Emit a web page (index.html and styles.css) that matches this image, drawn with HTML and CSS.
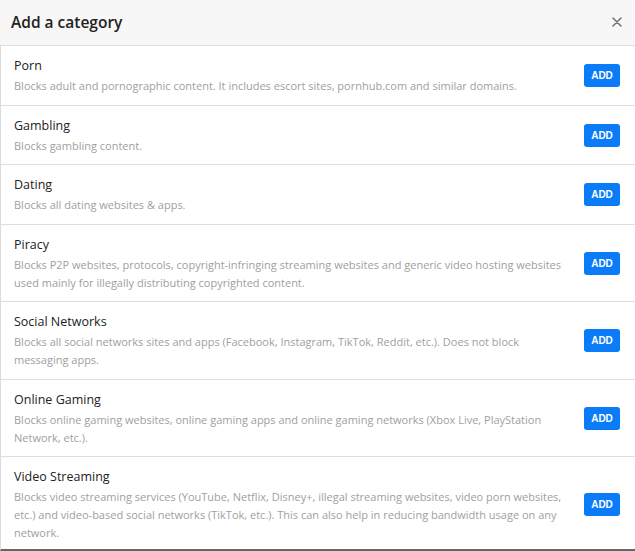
FILE: index.html
```html
<!DOCTYPE html>
<html>
<head>
<meta charset="utf-8">
<link rel="stylesheet" href="styles.css">
</head>
<body>
<div class="modal">
  <div class="modal-header">
    <h2 class="modal-title">Add a category</h2>
    <button class="close" aria-label="Close">
      <svg width="10" height="10" viewBox="0 0 10 10"><path d="M1 1L9 9M9 1L1 9" stroke="#707070" stroke-width="1.5" stroke-linecap="round"/></svg>
    </button>
  </div>
  <div class="modal-body">
    <div class="item">
      <div class="info">
        <div class="name">Porn</div>
        <div class="desc">Blocks adult and pornographic content. It includes escort sites, pornhub.com and similar domains.</div>
      </div>
      <button class="add">ADD</button>
    </div>
    <div class="item">
      <div class="info">
        <div class="name">Gambling</div>
        <div class="desc">Blocks gambling content.</div>
      </div>
      <button class="add">ADD</button>
    </div>
    <div class="item">
      <div class="info">
        <div class="name">Dating</div>
        <div class="desc">Blocks all dating websites &amp; apps.</div>
      </div>
      <button class="add">ADD</button>
    </div>
    <div class="item">
      <div class="info">
        <div class="name">Piracy</div>
        <div class="desc">Blocks P2P websites, protocols, copyright-infringing streaming websites and generic video hosting websites used mainly for illegally distributing copyrighted content.</div>
      </div>
      <button class="add">ADD</button>
    </div>
    <div class="item">
      <div class="info">
        <div class="name">Social Networks</div>
        <div class="desc">Blocks all social networks sites and apps (Facebook, Instagram, TikTok, Reddit, etc.). Does not block messaging apps.</div>
      </div>
      <button class="add">ADD</button>
    </div>
    <div class="item">
      <div class="info">
        <div class="name">Online Gaming</div>
        <div class="desc">Blocks online gaming websites, online gaming apps and online gaming networks (Xbox Live, PlayStation Network, etc.).</div>
      </div>
      <button class="add">ADD</button>
    </div>
    <div class="item">
      <div class="info">
        <div class="name">Video Streaming</div>
        <div class="desc">Blocks video streaming services (YouTube, Netflix, Disney+, illegal streaming websites, video porn websites, etc.) and video-based social networks (TikTok, etc.). This can also help in reducing bandwidth usage on any network.</div>
      </div>
      <button class="add">ADD</button>
    </div>
  </div>
</div>
</body>
</html>
```
FILE: styles.css
```css
* { box-sizing: border-box; }
html, body { margin: 0; padding: 0; background: #fff; }
body {
  font-family: "Open Sans", "Noto Sans", sans-serif;
  width: 635px;
  height: 551px;
  overflow: hidden;
}
.modal {
  display: flex;
  flex-direction: column;
  height: 551px;
}
.modal-header {
  display: flex;
  align-items: center;
  justify-content: space-between;
  height: 46px;
  padding: 0 13px 2px 11px;
  background: #f7f7f7;
  border-bottom: 1px solid #dedede;
}
.modal-title {
  margin: 0;
  font-size: 15.5px;
  font-weight: 600;
  color: #222;
}
.close {
  border: 0;
  background: transparent;
  padding: 0;
  width: 10px;
  height: 10px;
  display: flex;
}
.modal-body {
  flex: 1;
  border-left: 1px solid #dcdcdc;
  border-bottom: 2px solid #666;
  overflow: hidden;
}
.item {
  display: flex;
  align-items: center;
  gap: 16px;
  padding: 10px 15px 9.5px 13px;
  border-bottom: 1px solid #dedede;
}
.item:last-child { border-bottom: 0; }
.info { flex: 1; min-width: 0; }
.name {
  font-size: 12.5px;
  line-height: 20px;
  color: #222;
  margin-bottom: 1px;
}
.desc {
  font-size: 11px;
  line-height: 18px;
  color: #a0a0a0;
}
.add {
  flex: none;
  width: 36px;
  height: 23px;
  border: 0;
  border-radius: 3px;
  background: #0a7cf8;
  color: #fff;
  font-family: "Liberation Sans", Arial, sans-serif;
  font-weight: 700;
  font-size: 10px;
  padding: 0;
}
```
